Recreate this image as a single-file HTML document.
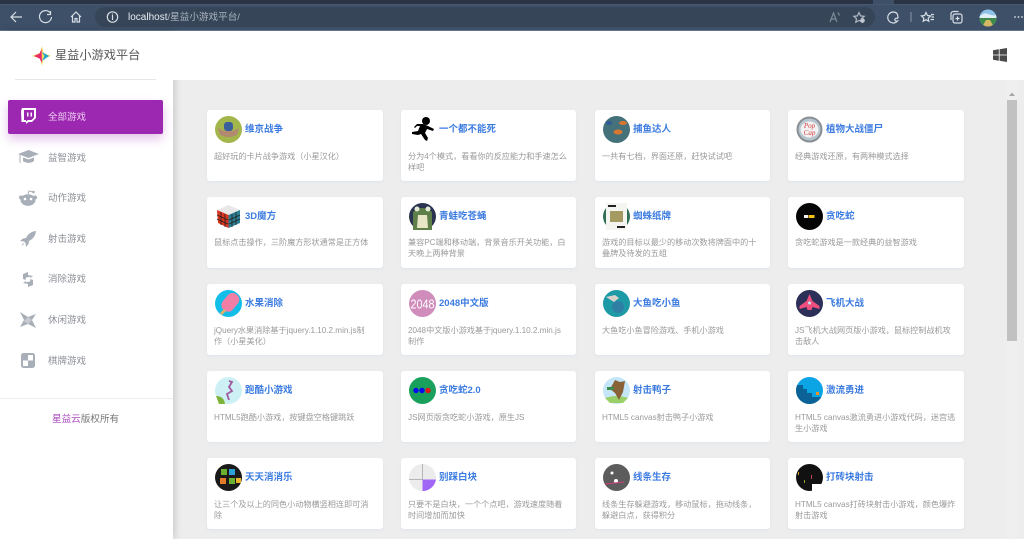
<!DOCTYPE html>
<html lang="zh"><head><meta charset="utf-8"><title>星益小游戏平台</title>
<style>
*{box-sizing:border-box}
html{margin:0;padding:0;width:1024px;height:539px;overflow:hidden;background:#ededed}
body{margin:0;padding:0;width:1024px;height:539px;overflow:hidden;background:#ededed;font-family:"Liberation Sans","Noto Sans CJK SC",sans-serif;filter:blur(.3px)}
.a{position:absolute}
#tabs{left:0;top:0;width:1024px;height:5px;background:#2a3444}
#gap{left:873px;top:0;width:21px;height:5px;background:#3e5068}
#bar{left:0;top:4px;width:1024px;height:27px;background:#3e5068;border-top:1px solid #47596f;border-bottom:1px solid #64748a}
#pill{left:95px;top:7px;width:780px;height:20px;border-radius:10px;background:#364557}
#url{left:128px;top:10px;font-size:9.6px;line-height:16px;color:#aab4c0;white-space:nowrap}
#url b{font-weight:400;color:#e8edf2;font-size:10px}
#head{left:0;top:31px;width:1024px;height:49px;background:#fff}
#side{left:0;top:31px;width:173px;height:508px;background:#fff;box-shadow:2px 0 7px rgba(0,0,0,.15)}
#logoline{left:15px;top:79px;width:141px;height:1px;background:#e6e6e6}
#brand{left:55px;top:46px;font-size:12.2px;line-height:18px;color:#555;white-space:nowrap}
#active{left:8px;top:100px;width:155px;height:34px;background:#9c27b0;border-radius:2px;box-shadow:0 5px 10px rgba(156,39,176,.28)}
.m{position:absolute;left:48px;font-size:9.5px;line-height:14px;color:#8b8f96;white-space:nowrap}
#foot{left:0;top:398px;width:173px;height:1px;background:#eee}
#copy{left:52px;top:413px;font-size:9.6px;line-height:14px;color:#777;white-space:nowrap}
#copy span{color:#a94bbd}
.c{position:absolute;width:176px;height:71px;background:#fff;border-radius:3px;box-shadow:0 1px 2px rgba(210,220,235,.5)}
.c svg{position:absolute;left:8px;top:6px;width:27px;height:27px}
.c h4{position:absolute;left:38px;top:13px;margin:0;font-size:9.5px;line-height:14px;font-weight:700;color:#3b7be0;white-space:nowrap}
.c p{position:absolute;left:7px;top:40.500px;margin:0;font-size:8.15px;line-height:11px;color:#9a9a9a;white-space:nowrap}
#track{left:1007px;top:80px;width:10px;height:459px;background:#efefef}
#thumb{left:1007px;top:100px;width:10px;height:241px;background:#c1c1c1}
</style></head><body>
<div class="a" id="tabs"></div>
<div class="a" id="gap"></div>
<div class="a" id="bar"></div>
<div class="a" id="pill"></div>
<svg class="a" style="left:0;top:0" width="1024" height="31" fill="none" stroke="#d8dee5" stroke-width="1.2">
<path d="M11 17h11M16 12l-5 5 5 5"/>
<path d="M50 12.600a6 6 0 1 0 1.500 4.400M50.500 11v3.500h-3.500"/>
<path d="M71 17l5-5 5 5M72.500 16v6h2.500v-3.500h2v3.500h2.500v-6"/>
<circle cx="112.500" cy="17" r="5.200"/><path d="M112.500 15v5M112.500 13.500v1"/>
<path d="M830 22l3.500-9 3.500 9M831.500 19h4M838 12.500l1.500 3" stroke="#7e8b99"/>
<path d="M859 12.500l1.600 3.400 3.600.400-2.700 2.400.7 3.500-3.200-1.800-3.200 1.800.7-3.500-2.700-2.400 3.600-.4z" stroke="#aeb7c2"/><circle cx="862.500" cy="20.500" r="2.300" fill="#c0c7d0" stroke="none"/>
<path d="M897 13.500a5.500 5.500 0 1 0 .5 7.500c-2 .5-3-.8-2.500-2 .5-1 2-1 2.500-.5 .8-1 .5-3-.5-5z"/>
<path d="M911 12v10" stroke="#7e8b99"/>
<path d="M926 12.500l1.400 3 3.200.4-2.400 2.200.6 3.100-2.800-1.500-2.800 1.500.6-3.100-2.400-2.200 3.200-.4zM931 14.500h3M931.500 17h2.500M930.500 19.500h3.500"/>
<rect x="953" y="14" width="9" height="9" rx="2"/><path d="M957.500 16.500v4M955.500 18.500h4M951 20v-6a2.500 2.500 0 0 1 2.500-2.500h5"/>
<path d="M1015 17h.01M1018.500 17h.01M1022 17h.01" stroke-width="1.800" stroke-linecap="round"/>
</svg>
<svg class="a" style="left:979px;top:9px" width="18" height="18" viewBox="0 0 18 18"><defs><clipPath id="av"><circle cx="9" cy="9" r="8.500"/></clipPath></defs><g clip-path="url(#av)"><rect width="18" height="18" fill="#8fc2e8"/><path d="M0 8q5-5 9-3t9 1v3H0z" fill="#dfeef7"/><rect y="9" width="18" height="9" fill="#3f8a4a"/><path d="M7 11h4l4 7H3z" fill="#d7b865"/></g></svg>
<div class="a" id="url"><b>localhost</b>/星益小游戏平台/</div>

<div class="a" id="side"></div>
<div class="a" id="head"></div>
<svg class="a" style="left:993px;top:48px" width="14" height="14" viewBox="0 0 14 14" fill="#4a4a4a"><path d="M0 2.200l5.800-.9v5.300H0zM6.600 1.200L14 0v6.600H6.600zM0 7.400h5.800v5.300L0 11.800zM6.600 7.400H14V14l-7.400-1.200z"/></svg>
<div class="a" id="track"></div><div class="a" id="thumb"></div>
<svg class="a" style="left:1009px;top:92px" width="6" height="5"><path d="M0 4l3-3.500L6 4z" fill="#a5a5a5"/></svg>

<div class="a" id="logoline"></div>
<svg class="a" style="left:32px;top:46px" width="19" height="20" viewBox="0 0 19 20"><path d="M10 0l1.500 7 7.500 3-7.500 2.500L10 20l-2-7.500L0 10l8-3z" fill="#f5d860"/><path d="M9.500 3L10 17 7.500 12.500 2 10l5.500-2.500z" fill="#ec2a6b"/><path d="M10 6l7 4-7 5 2.500-5z" fill="#21a6c9"/></svg>
<div class="a" id="brand">星益小游戏平台</div>
<div class="a" id="active"></div>
<svg class="a" style="left:20px;top:108px" width="16" height="16" viewBox="0 0 16 16"><path d="M2 0h14v10l-4 4H8.500L6 16V14H1.500L1 3z" fill="#fff"/><path d="M4 2h10v7.500L11.500 12H8l-2 1.500V12H4z" fill="#9c27b0"/><path d="M7 4.500h1.500v4H7zM10.500 4.500H12v4h-1.500z" fill="#fff"/></svg>
<div class="m" style="top:111px;color:#eecdf3">全部游戏</div>
<svg class="a" style="left:18px;top:150px" width="21" height="15" viewBox="0 0 21 15" fill="#a9afb8"><path d="M10.500 0L21 4l-10.500 4L0 4z"/><path d="M5 7.500l5.500 2 5.500-2V11c-3 2.500-8 2.500-11 0zM1.500 5v8h1V5z"/></svg>
<div class="m" style="top:152px">益智游戏</div>
<svg class="a" style="left:19px;top:190px" width="18" height="16" viewBox="0 0 18 16"><ellipse cx="9" cy="10" rx="7.500" ry="5.800" fill="#a9afb8"/><circle cx="2" cy="7.500" r="2" fill="#a9afb8"/><circle cx="16" cy="7.500" r="2" fill="#a9afb8"/><circle cx="6" cy="9" r="1.300" fill="#fff"/><circle cx="12" cy="9" r="1.300" fill="#fff"/><path d="M9 4l1-3 4 1" stroke="#a9afb8" fill="none"/><circle cx="14.500" cy="2" r="1.300" fill="#a9afb8"/></svg>
<div class="m" style="top:192px">动作游戏</div>
<svg class="a" style="left:20px;top:231px" width="16" height="16" viewBox="0 0 16 16" fill="#a9afb8"><path d="M16 0c-5 .5-8 3-10 7L3 7.500 0 10l4 .5 1.500 1.500L6 16l2.500-3 .5-3c4-2 6.500-5 7-10z"/><path d="M3 12l1 1-2.500 2z"/></svg>
<div class="m" style="top:233px">射击游戏</div>
<svg class="a" style="left:22px;top:272px" width="12" height="15" viewBox="0 0 12 15" fill="#a9afb8"><path d="M1 2l5-2v3l5 1-3 2V4.800L4 5.500 3.500 8 1 7zM11 13l-5 2v-3l-5-1 3-2v1.200l4-.7.500-2.500 2.500 1z"/></svg>
<div class="m" style="top:273px">消除游戏</div>
<svg class="a" style="left:20px;top:312px" width="16" height="16" viewBox="0 0 16 16" fill="#a9afb8"><path d="M0 0l8 5 8-3-4 6 4 8-8-4-8 3 4-7z"/><path d="M8 5l4 3-4 4-4-3z" fill="#c7cbd1"/></svg>
<div class="m" style="top:314px">休闲游戏</div>
<svg class="a" style="left:21px;top:353px" width="14" height="15" viewBox="0 0 14 15"><rect width="14" height="15" rx="2.500" fill="#a9afb8"/><rect x="7" y="2" width="5" height="5.500" fill="#fff"/><rect x="2" y="7.500" width="5" height="5.500" fill="#fff"/></svg>
<div class="m" style="top:355px">棋牌游戏</div>
<div class="a" id="foot"></div>
<div class="a" id="copy"><span>星益云</span>版权所有</div>

<!-- row 1 -->
<div class="c" style="left:207px;top:110px"><svg viewBox="0 0 27 27"><circle cx="13.500" cy="13.500" r="13.500" fill="#a3b64b"/><path d="M3 12l6 3h9l6-3-2 7-6 2h-5l-6-2z" fill="#b18a70"/><rect x="9" y="6" width="9" height="9" rx="3" fill="#3b5f9c"/></svg><h4>维京战争</h4><p>超好玩的卡片战争游戏（小星汉化）</p></div>
<div class="c" style="left:401px;top:110px;width:175px"><svg viewBox="0 0 27 27"><circle cx="17" cy="5" r="4" fill="#000"/><path d="M14 8l5 2 6 3-1 2-6-2-2 4 3 5-1 3-2-1-4-6-3 1-6-1 0-2 6-1 2-5-3 0-2 2-1-1 3-3z" fill="#000"/></svg><h4>一个都不能死</h4><p>分为4个模式，看看你的反应能力和手速怎么<br>样吧</p></div>
<div class="c" style="left:595px;top:110px;width:175px"><svg viewBox="0 0 27 27"><circle cx="13.500" cy="13.500" r="13.500" fill="#44717a"/><ellipse cx="20" cy="7" rx="4" ry="2" fill="#d9772f"/><ellipse cx="15" cy="16" rx="4.500" ry="2.500" fill="#d9772f"/><ellipse cx="6" cy="7" rx="3" ry="2" fill="#2f5a96"/></svg><h4>捕鱼达人</h4><p>一共有七档，界面还原，赶快试试吧</p></div>
<div class="c" style="left:788px;top:110px"><svg viewBox="0 0 27 27"><circle cx="13.500" cy="13.500" r="12" fill="#b7c5cf" stroke="#8a8f94" stroke-width="2"/><ellipse cx="13.500" cy="13.500" rx="9" ry="8" fill="#f3f3f3"/><text x="13.500" y="12" font-size="7" font-style="italic" text-anchor="middle" fill="#d43a3a" font-family="Liberation Serif,serif">Pop</text><text x="13.500" y="19" font-size="7" font-style="italic" text-anchor="middle" fill="#d43a3a" font-family="Liberation Serif,serif">Cap</text></svg><h4>植物大战僵尸</h4><p>经典游戏还原，有两种模式选择</p></div>
<!-- row 2 -->
<div class="c" style="left:207px;top:196.500px"><svg viewBox="0 0 27 27"><path d="M13.500 2L25 7l-11 5L2 7z" fill="#e8e8e8"/><path d="M2 7l11.500 5v13L3 20z" fill="#d9351f"/><path d="M25 7l-11.500 5v13L25 20z" fill="#2d7f93"/><path d="M6 9v13M10 11v13M2 12l11 5M2 16l11 5M17 11v13M21 9v13M25 12l-11 5M25 16l-11 5" stroke="#222" stroke-width=".8"/></svg><h4>3D魔方</h4><p>鼠标点击操作，三阶魔方形状通常是正方体</p></div>
<div class="c" style="left:401px;top:196.500px;width:175px"><svg viewBox="0 0 27 27"><circle cx="13.500" cy="13.500" r="13.500" fill="#2a3450"/><path d="M4 27V9q9-8 19 0v18z" fill="#5e7f4a"/><path d="M8 25l1-13h9l1 13z" fill="#e9e6c8"/><circle cx="8" cy="6" r="2.500" fill="#e6ecd8"/><circle cx="19" cy="6" r="2.500" fill="#e6ecd8"/></svg><h4>青蛙吃苍蝇</h4><p>兼容PC端和移动端，背景音乐开关功能，白<br>天晚上两种背景</p></div>
<div class="c" style="left:595px;top:196.500px;width:175px"><svg viewBox="0 0 27 27"><circle cx="13.500" cy="13.500" r="13.500" fill="#2f6f55"/><rect x="3" y="0" width="21" height="27" fill="#f4f4f0"/><rect x="7" y="8" width="13" height="11" fill="#a59a62"/><path d="M5 3h8M14 24h8" stroke="#222" stroke-width="2"/></svg><h4>蜘蛛纸牌</h4><p>游戏的目标以最少的移动次数将牌面中的十<br>叠牌及待发的五组</p></div>
<div class="c" style="left:788px;top:196.500px"><svg viewBox="0 0 27 27"><circle cx="13.500" cy="13.500" r="13.500" fill="#050505"/><rect x="8" y="12" width="4" height="3" fill="#f2f2f2"/><rect x="12.500" y="12" width="6" height="3" fill="#f2c21b"/></svg><h4>贪吃蛇</h4><p>贪吃蛇游戏是一款经典的益智游戏</p></div>
<!-- row 3 -->
<div class="c" style="left:207px;top:284px"><svg viewBox="0 0 27 27"><circle cx="13.500" cy="13.500" r="13.500" fill="#12bde8"/><rect x="9" y="2" width="13" height="20" rx="6" transform="rotate(40 15 12)" fill="#f27ea6"/><path d="M9 19l-4 4 2 2 4-4z" fill="#e0b26a"/></svg><h4>水果消除</h4><p>jQuery水果消除基于jquery.1.10.2.min.js制<br>作（小星美化）</p></div>
<div class="c" style="left:401px;top:284px;width:175px"><svg viewBox="0 0 27 27"><circle cx="13.500" cy="13.500" r="13.500" fill="#d08dbb"/><text x="13.500" y="18.500" font-size="13" text-anchor="middle" fill="#fff" font-family="Liberation Sans,sans-serif" textLength="24" lengthAdjust="spacingAndGlyphs">2048</text></svg><h4>2048中文版</h4><p>2048中文版小游戏基于jquery.1.10.2.min.js<br>制作</p></div>
<div class="c" style="left:595px;top:284px;width:175px"><svg viewBox="0 0 27 27"><circle cx="13.500" cy="13.500" r="13.500" fill="#1d9aa6"/><path d="M3 7l9-2 4 3-5 4z" fill="#d9d2cc"/><circle cx="15" cy="17" r="6" fill="#2f7fa5"/></svg><h4>大鱼吃小鱼</h4><p>大鱼吃小鱼冒险游戏、手机小游戏</p></div>
<div class="c" style="left:788px;top:284px"><svg viewBox="0 0 27 27"><circle cx="13.500" cy="13.500" r="13.500" fill="#2c2f57"/><path d="M13.500 4l3 7 7 5v3l-7-2-1 3h-4l-1-3-7 2v-3l7-5z" fill="#ee4f7f"/><circle cx="13.500" cy="13" r="1.500" fill="#bfe3ee"/></svg><h4>飞机大战</h4><p>JS飞机大战网页版小游戏，鼠标控制战机攻<br>击敌人</p></div>
<!-- row 4 -->
<div class="c" style="left:207px;top:371px"><svg viewBox="0 0 27 27"><circle cx="13.500" cy="13.500" r="13.500" fill="#cdf0f5"/><path d="M1 19q8 0 9 8H4z" fill="#7db23b"/><path d="M14 4l3 1-3 5 3 4-5 3 2 6" stroke="#a05aa0" stroke-width="1.800" fill="none"/></svg><h4>跑酷小游戏</h4><p>HTML5跑酷小游戏，按键盘空格键跳跃</p></div>
<div class="c" style="left:401px;top:371px;width:175px"><svg viewBox="0 0 27 27"><circle cx="13.500" cy="13.500" r="13.500" fill="#18a05c"/><circle cx="7" cy="13.500" r="2.700" fill="#0a0aee"/><circle cx="13" cy="13.500" r="2.700" fill="#0a0aee"/><circle cx="19" cy="13.500" r="2.700" fill="#e01818"/></svg><h4>贪吃蛇2.0</h4><p>JS网页版贪吃蛇小游戏，原生JS</p></div>
<div class="c" style="left:595px;top:371px;width:175px"><svg viewBox="0 0 27 27"><circle cx="13.500" cy="13.500" r="13.500" fill="#c5e6f7"/><path d="M2 21q12-4 23 0l-5 5H7z" fill="#9bd068"/><path d="M7 12l5-9 5 2 5-1-2 11-4 8-4-7z" fill="#8a6238"/><rect x="4" y="10" width="7" height="3" fill="#3f8a4a"/></svg><h4>射击鸭子</h4><p>HTML5 canvas射击鸭子小游戏</p></div>
<div class="c" style="left:788px;top:371px"><svg viewBox="0 0 27 27"><defs><clipPath id="jl"><circle cx="13.500" cy="13.500" r="13.500"/></clipPath></defs><circle cx="13.500" cy="13.500" r="13.500" fill="#0ba5e6"/><path clip-path="url(#jl)" d="M0 8h7v4h4v4h5v4h11v7H0z" fill="#0a6296"/><rect x="20" y="15" width="3" height="3" fill="#ef8f1c"/></svg><h4>激流勇进</h4><p>HTML5 canvas激流勇进小游戏代码，迷宫逃<br>生小游戏</p></div>
<!-- row 5 -->
<div class="c" style="left:207px;top:458px"><svg viewBox="0 0 27 27"><circle cx="13.500" cy="13.500" r="13.500" fill="#1a1a1a"/><rect x="6" y="5" width="6" height="6" fill="#6ab12f"/><rect x="14" y="5" width="6" height="6" fill="#2e9fd6"/><rect x="5" y="14" width="6" height="6" fill="#e37a2a"/><rect x="14" y="14" width="6" height="6" fill="#6ab12f"/><rect x="21" y="14" width="5" height="5" fill="#e8b52a"/></svg><h4>天天消消乐</h4><p>让三个及以上的同色小动物横竖相连即可消<br>除</p></div>
<div class="c" style="left:401px;top:458px;width:175px"><svg viewBox="0 0 27 27"><circle cx="13.500" cy="13.500" r="13.500" fill="#ececec"/><path d="M13.500 15.500H27A13.500 13.500 0 0 1 13.500 27z" fill="#a066f5"/><path d="M13.500 0v15.500M0 15.500h13.500" stroke="#b5b5b5"/></svg><h4>别踩白块</h4><p>只要不是白块，一个个点吧，游戏速度随着<br>时间增加而加快</p></div>
<div class="c" style="left:595px;top:458px;width:175px"><svg viewBox="0 0 27 27"><circle cx="13.500" cy="13.500" r="13.500" fill="#5c5c5c"/><circle cx="9" cy="9" r="1.500" fill="#fff"/><circle cx="13" cy="17" r="2" fill="#fff"/><path d="M2 20l19-2" stroke="#d43a7a"/></svg><h4>线条生存</h4><p>线条生存躲避游戏，移动鼠标，拖动线条，<br>躲避白点，获得积分</p></div>
<div class="c" style="left:788px;top:458px"><svg viewBox="0 0 27 27"><circle cx="13.500" cy="13.500" r="13.500" fill="#111"/><rect x="16" y="20" width="11" height="7" fill="#fff"/><rect x="15" y="11" width="1" height="4" fill="#d43a5a"/><rect x="8" y="16" width="1" height="3" fill="#88a02a"/><rect x="2" y="8" width="1" height="3" fill="#d9a02a"/></svg><h4>打砖块射击</h4><p>HTML5 canvas打砖块射击小游戏，颜色爆炸<br>射击游戏</p></div>
</body></html>
